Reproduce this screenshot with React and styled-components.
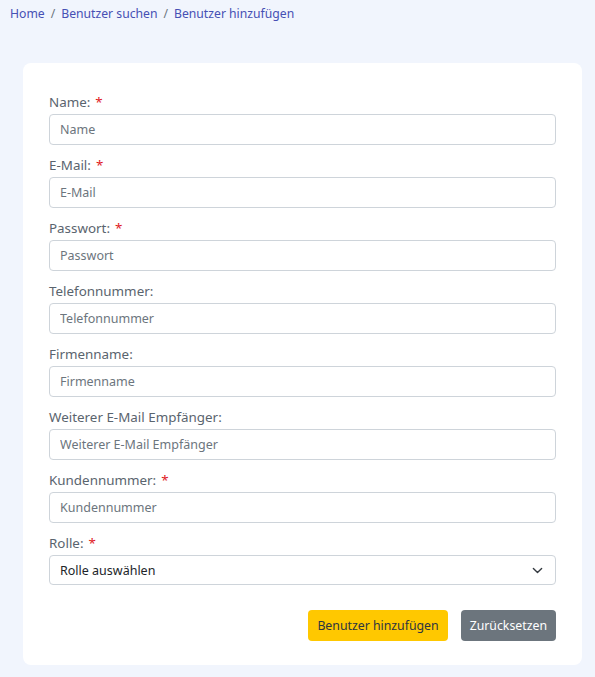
import styled, { createGlobalStyle } from "styled-components";

const GlobalStyle = createGlobalStyle`
    body{
        margin: 0;
        background-color: #f1f5fd;
        font-family: "Noto Sans", "Open Sans", sans-serif;
    }
`

const Page = styled.div`
    padding: 5px 13px 12px 23px;
`

const Breadcrumb = styled.nav`
    display: flex;
    gap: 6px;
    margin-left: -13px;
    font-size: 12.2px;
    line-height: 18px;
    color: #4650b4;

    .Breadcrumb__Sep{
        color: #6c757d;
    }
`

const Card = styled.form`
    margin-top: 40px;
    background-color: white;
    border-radius: 8px;
    padding: 30px 26px 24px 26px;
    display: flex;
    flex-direction: column;
    gap: 11px;
`

const Field = styled.div`
    display: flex;
    flex-direction: column;
    gap: 3px;
`

const Label = styled.label`
    font-size: 13.4px;
    line-height: 18px;
    color: #5a646e;

    .Label__Star{
        color: #e0191e;
        margin-left: 5px;
    }
`

const Input = styled.input`
    box-sizing: border-box;
    height: 31px;
    border: 1px solid #ced4da;
    border-radius: 4px;
    padding: 0 10px;
    font-family: inherit;
    font-size: 12.5px;
    color: #212529;

    &::placeholder{
        color: #6c757d;
    }
`

const Select = styled.div`
    box-sizing: border-box;
    height: 30px;
    border: 1px solid #ced4da;
    border-radius: 4px;
    padding: 0 12px 0 10px;
    display: flex;
    align-items: center;
    justify-content: space-between;
    font-size: 12.5px;
    color: #212529;
`

const Actions = styled.div`
    display: flex;
    justify-content: flex-end;
    gap: 13px;
    margin-top: 14px;
`

const Button = styled.button`
    height: 31px;
    padding: 0 9px;
    border: none;
    border-radius: 4px;
    font-family: inherit;
    font-size: 12.3px;
    background-color: ${p => p.$variant === "primary" ? "#ffc800" : "#6c757d"};
    color: ${p => p.$variant === "primary" ? "#2d3540" : "white"};
`

const fields = [
    { name: "Name", required: true },
    { name: "E-Mail", required: true },
    { name: "Passwort", required: true },
    { name: "Telefonnummer" },
    { name: "Firmenname" },
    { name: "Weiterer E-Mail Empfänger" },
    { name: "Kundennummer", required: true },
]

const App = () => {
    return <Page>
        <GlobalStyle />
        <Breadcrumb>
            <span>Home</span>
            <span className="Breadcrumb__Sep">/</span>
            <span>Benutzer suchen</span>
            <span className="Breadcrumb__Sep">/</span>
            <span>Benutzer hinzufügen</span>
        </Breadcrumb>

        <Card>
            {fields.map(f => (
                <Field key={f.name}>
                    <Label>
                        {f.name}:
                        {f.required && <span className="Label__Star">*</span>}
                    </Label>
                    <Input placeholder={f.name} />
                </Field>
            ))}

            <Field>
                <Label>
                    Rolle:
                    <span className="Label__Star">*</span>
                </Label>
                <Select>
                    <span>Rolle auswählen</span>
                    <svg width="11" height="11" viewBox="0 0 16 16" fill="none" stroke="#343a40" strokeWidth="2" strokeLinecap="round" strokeLinejoin="round">
                        <path d="M2 5l6 6 6-6" />
                    </svg>
                </Select>
            </Field>

            <Actions>
                <Button type="button" $variant="primary">Benutzer hinzufügen</Button>
                <Button type="button">Zurücksetzen</Button>
            </Actions>
        </Card>
    </Page>
}

export default App;
